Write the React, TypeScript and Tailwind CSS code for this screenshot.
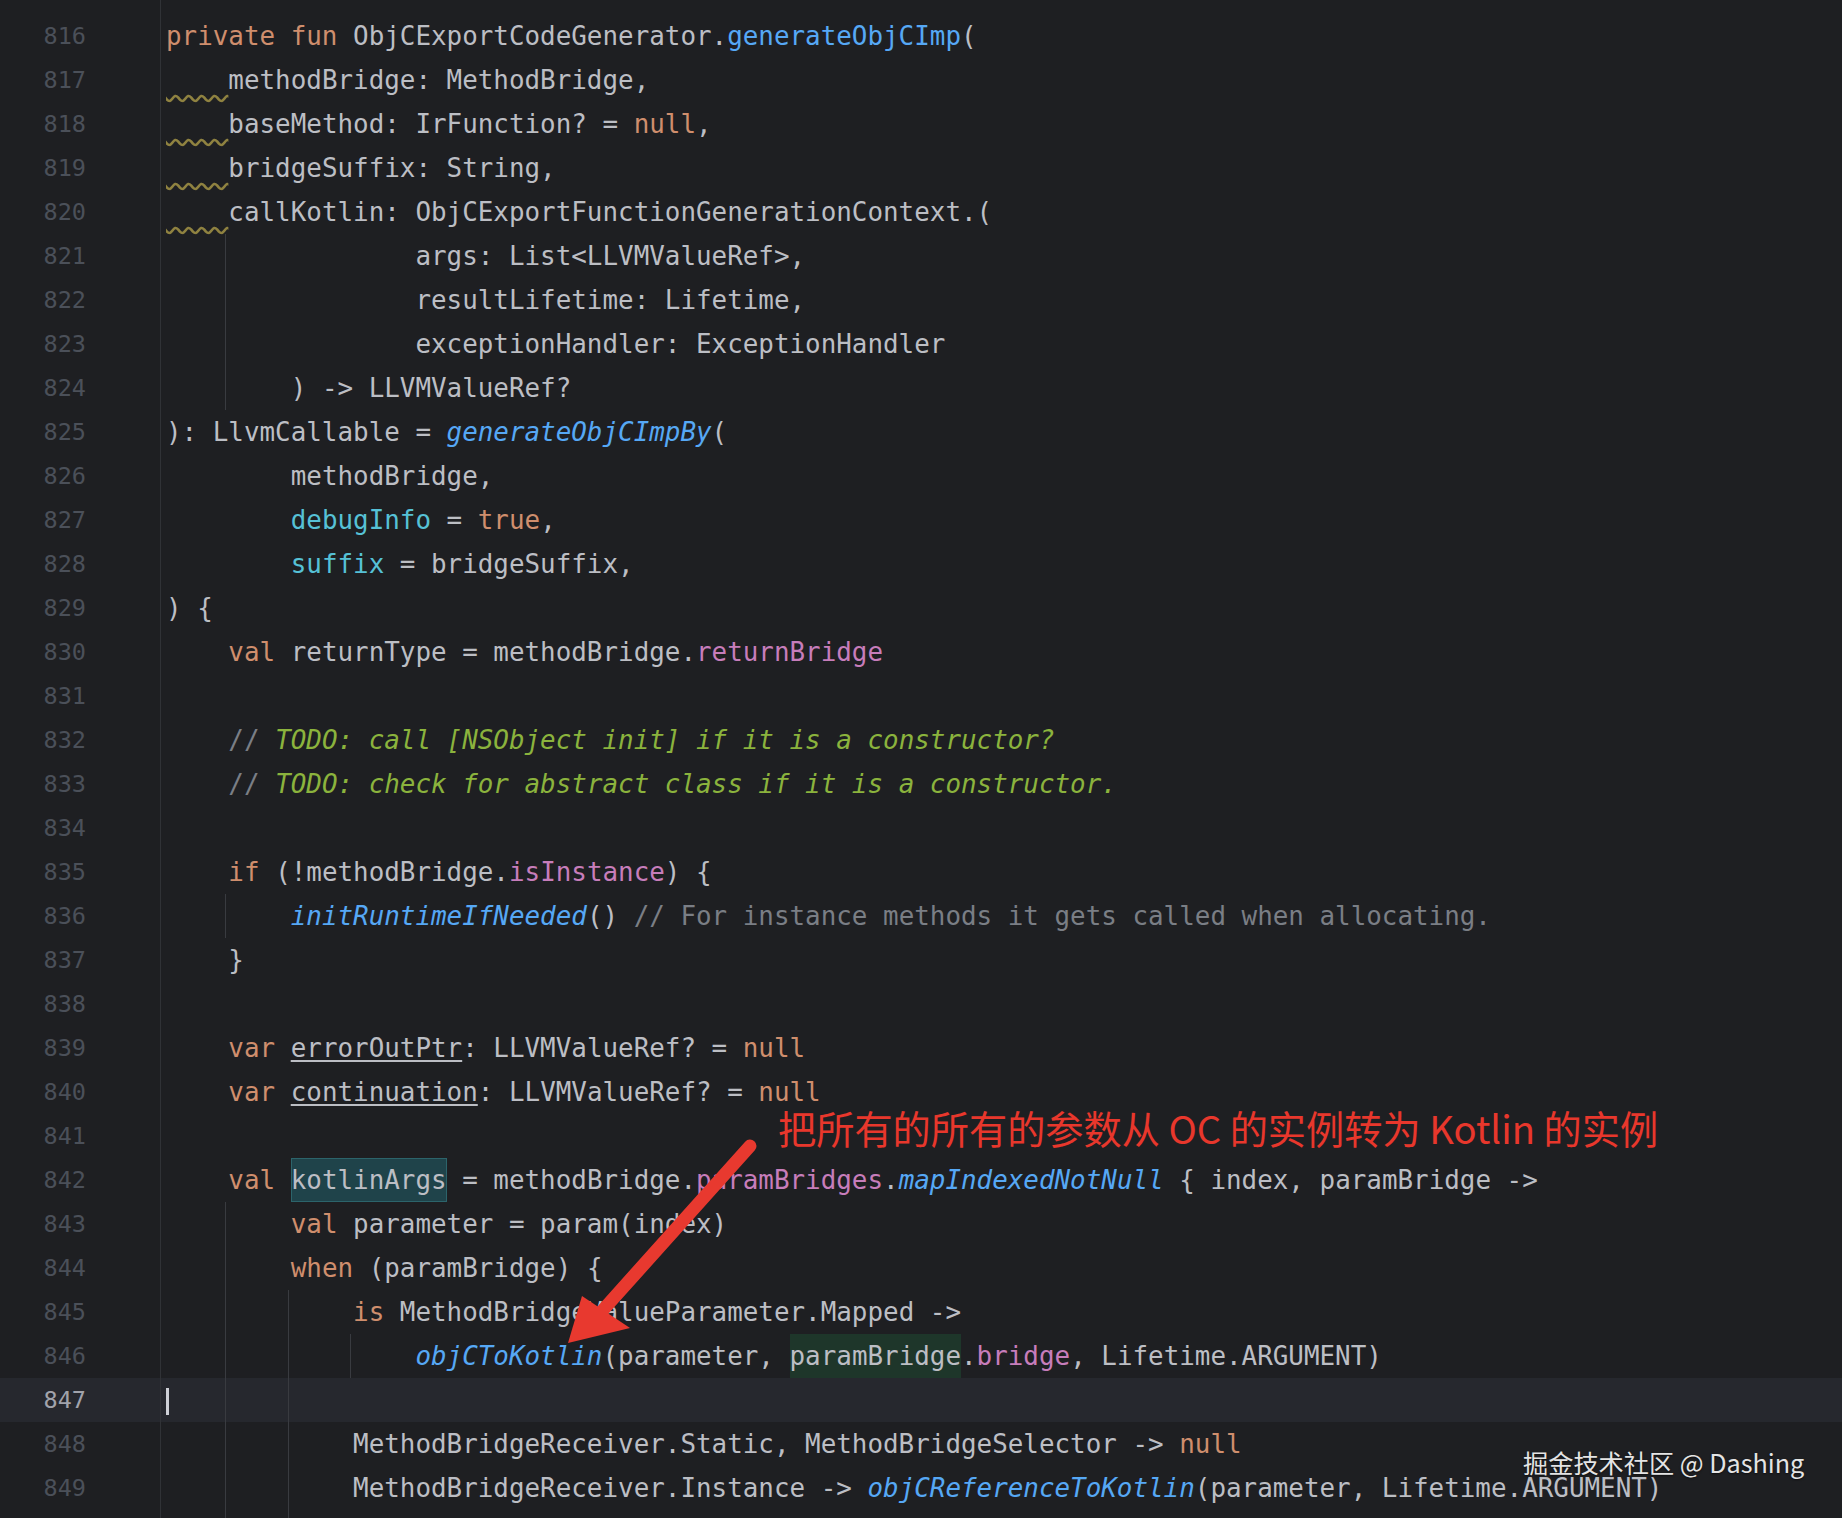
import type { ReactNode } from 'react'

// token helpers, IntelliJ "Dark" palette
const K = ({ children }: { children: ReactNode }) => <span className="text-[#cf8e6d]">{children}</span>
const F = ({ children }: { children: ReactNode }) => <span className="text-[#56a8f5]">{children}</span>
const C = ({ children }: { children: ReactNode }) => <span className="text-[#56a8f5] italic">{children}</span>
const P = ({ children }: { children: ReactNode }) => <span className="text-[#c77dbb]">{children}</span>
const N = ({ children }: { children: ReactNode }) => <span className="text-[#56c1d6]">{children}</span>
const G = ({ children }: { children: ReactNode }) => <span className="text-[#7a7e85]">{children}</span>
const T = ({ children }: { children: ReactNode }) => <span className="text-[#8bb33d] italic">{children}</span>
const U = ({ children }: { children: ReactNode }) => (
  <span className="underline decoration-[#bcbec4] underline-offset-[3px]">{children}</span>
)
const Wavy = () => (
  <span className="underline decoration-wavy decoration-[#8f8240] underline-offset-[5px]">{'    '}</span>
)

type Line = { n: number; hideNum?: boolean; guides?: number[]; current?: boolean; code?: ReactNode }

const lines: Line[] = [
  { n: 815 },
  { n: 816, code: <><K>private fun</K> ObjCExportCodeGenerator.<F>generateObjCImp</F>(</> },
  { n: 817, code: <><Wavy />methodBridge: MethodBridge,</> },
  { n: 818, code: <><Wavy />baseMethod: IrFunction? = <K>null</K>,</> },
  { n: 819, code: <><Wavy />bridgeSuffix: String,</> },
  { n: 820, code: <><Wavy />callKotlin: ObjCExportFunctionGenerationContext.(</> },
  { n: 821, guides: [4], code: <>{'                '}args: List&lt;LLVMValueRef&gt;,</> },
  { n: 822, guides: [4], code: <>{'                '}resultLifetime: Lifetime,</> },
  { n: 823, guides: [4], code: <>{'                '}exceptionHandler: ExceptionHandler</> },
  { n: 824, guides: [4], code: <>{'        '}) -&gt; LLVMValueRef?</> },
  { n: 825, code: <>): LlvmCallable = <C>generateObjCImpBy</C>(</> },
  { n: 826, code: <>{'        '}methodBridge,</> },
  { n: 827, code: <>{'        '}<N>debugInfo</N> = <K>true</K>,</> },
  { n: 828, code: <>{'        '}<N>suffix</N> = bridgeSuffix,</> },
  { n: 829, code: <>) {'{'}</> },
  { n: 830, code: <>{'    '}<K>val</K> returnType = methodBridge.<P>returnBridge</P></> },
  { n: 831 },
  { n: 832, code: <>{'    '}<G>//</G><T> TODO: call [NSObject init] if it is a constructor?</T></> },
  { n: 833, code: <>{'    '}<G>//</G><T> TODO: check for abstract class if it is a constructor.</T></> },
  { n: 834 },
  { n: 835, code: <>{'    '}<K>if</K> (!methodBridge.<P>isInstance</P>) {'{'}</> },
  { n: 836, guides: [4], code: <>{'        '}<C>initRuntimeIfNeeded</C>() <G>// For instance methods it gets called when allocating.</G></> },
  { n: 837, code: <>{'    '}{'}'}</> },
  { n: 838 },
  { n: 839, code: <>{'    '}<K>var</K> <U>errorOutPtr</U>: LLVMValueRef? = <K>null</K></> },
  { n: 840, code: <>{'    '}<K>var</K> <U>continuation</U>: LLVMValueRef? = <K>null</K></> },
  { n: 841 },
  {
    n: 842,
    code: (
      <>
        {'    '}<K>val</K>{' '}
        <span className="inline-block h-[44px] align-top bg-[#1f434a] shadow-[inset_0_0_0_1px_#2c646b]">kotlinArgs</span>
        {' '}= methodBridge.<P>paramBridges</P>.<C>mapIndexedNotNull</C> {'{'} index, paramBridge -&gt;
      </>
    ),
  },
  { n: 843, guides: [4], code: <>{'        '}<K>val</K> parameter = param(index)</> },
  { n: 844, guides: [4], code: <>{'        '}<K>when</K> (paramBridge) {'{'}</> },
  { n: 845, guides: [4, 8], code: <>{'            '}<K>is</K> MethodBridgeValueParameter.Mapped -&gt;</> },
  {
    n: 846,
    guides: [4, 8, 12],
    code: (
      <>
        {'                '}<C>objCToKotlin</C>(parameter,{' '}
        <span className="inline-block h-[44px] align-top bg-[#1e362a]">paramBridge</span>.<P>bridge</P>, Lifetime.ARGUMENT)
      </>
    ),
  },
  { n: 847, guides: [4, 8], current: true, code: <span className="inline-block w-[3px] h-[27px] bg-[#ced0d6] align-middle" /> },
  { n: 848, guides: [4, 8], code: <>{'            '}MethodBridgeReceiver.Static, MethodBridgeSelector -&gt; <K>null</K></> },
  { n: 849, guides: [4, 8], code: <>{'            '}MethodBridgeReceiver.Instance -&gt; <C>objCReferenceToKotlin</C>(parameter, Lifetime.ARGUMENT)</> },
  { n: 850, hideNum: true, guides: [4, 8] },
]

function CodeLine({ line }: { line: Line }) {
  return (
    <div className={`relative flex h-[44px] ${line.current ? 'bg-[#26282e]' : ''}`}>
      <div
        className={`w-[160px] shrink-0 pr-[74px] text-right text-[23.5px] leading-[44px] ${
          line.current ? 'text-[#a1a3ab]' : 'text-[#4b5059]'
        }`}
      >
        {line.hideNum ? '' : line.n}
      </div>
      <div className="w-px shrink-0 bg-[#303236]" />
      <div className="pl-[5px] whitespace-pre text-[25.9px] leading-[44px] text-[#bcbec4]">{line.code}</div>
      {line.guides?.map((c) => (
        <div
          key={c}
          className="absolute top-0 h-[44px] w-px bg-[#393b40]"
          style={{ left: 163 + c * 15.59 }}
        />
      ))}
    </div>
  )
}

export default function App() {
  return (
    <div className="relative h-[1518px] w-full overflow-hidden bg-[#1e1f22] font-['DejaVu_Sans_Mono',monospace]">
      <div className="-mt-[30px]">
        {lines.map((l) => (
          <CodeLine key={l.n} line={l} />
        ))}
      </div>

      {/* screenshot annotation */}
      <div className="absolute left-[778px] top-[1109px] whitespace-pre text-[38.2px] leading-[38px] text-[#e8372c] font-['Noto_Sans_CJK_SC',sans-serif]">
        把所有的所有的参数从 OC 的实例转为 Kotlin 的实例
      </div>
      <svg className="absolute left-0 top-0 pointer-events-none" width="1842" height="1518">
        <line x1="750" y1="1146" x2="603" y2="1310" stroke="#e8392f" strokeWidth="13" strokeLinecap="round" />
        <polygon points="568,1343 582,1296 630,1328" fill="#e8392f" />
      </svg>

      {/* watermark */}
      <div className="absolute left-[1523px] top-[1446px] whitespace-pre text-[25.2px] leading-[32px] text-[#e4e4e4] [text-shadow:0_1px_2px_rgba(0,0,0,0.6)] font-['Noto_Sans_CJK_SC',sans-serif]">
        掘金技术社区 @ Dashing
      </div>
    </div>
  )
}
